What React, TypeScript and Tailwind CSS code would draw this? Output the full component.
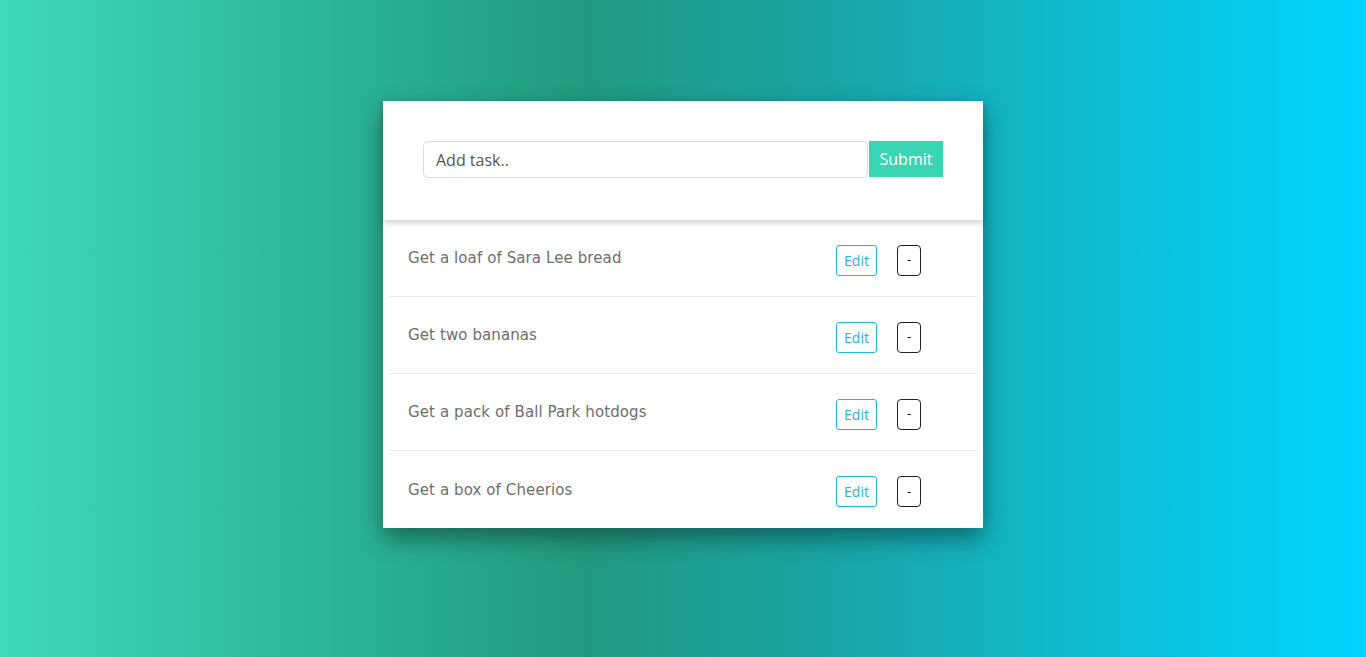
import { useState } from 'react';

const TASKS = [
  'Get a loaf of Sara Lee bread',
  'Get two bananas',
  'Get a pack of Ball Park hotdogs',
  'Get a box of Cheerios',
];

export default function App() {
  const [task, setTask] = useState('');

  return (
    <div className="min-h-screen w-full bg-[linear-gradient(to_right,#3cdabb_0%,#2bb395_25%,#229a80_43%,#1aa4a4_60%,#0fbcd0_80%,#00d4ff_100%)] pt-[101px] font-['Open_Sans',sans-serif]">
      <div className="mx-auto w-[600px] bg-white shadow-[0_10px_22px_rgba(0,0,0,0.4)]">

        {/* ── Add task ── */}
        <div className="relative z-10 flex h-[119px] items-start px-10 pt-10 shadow-[0_3px_6px_rgba(0,0,0,0.18)]">
          <input
            value={task}
            onChange={e => setTask(e.target.value)}
            placeholder="Add task.."
            className="h-[37px] min-w-0 flex-1 rounded-[5px] border border-[#dcdcdc] px-3 text-[16px] text-[#555] outline-none placeholder:text-[#555]"
          />
          <button className="ml-[1px] h-[36px] w-[74px] bg-[#3ad6b4] text-[16px] text-white">
            Submit
          </button>
        </div>

        {/* ── List ── */}
        <ul className="px-[6px]">
          {TASKS.map((t, i) => (
            <li
              key={t}
              className={`flex h-[77px] items-center pl-[19px] pr-[56px] ${i < TASKS.length - 1 ? 'border-b border-[#e8e8e8]' : ''}`}
            >
              <span className="mt-[1px] flex-1 font-['DejaVu_Sans',sans-serif] text-[15px] tracking-[0.1px] text-[#6e6e6e]">
                {t}
              </span>
              <button className="mt-[4px] h-[31px] w-[41px] rounded-[3px] border border-[#22b9d6] text-[14px] text-[#26b5d3]">
                Edit
              </button>
              <button className="ml-5 mt-[4px] h-[31px] w-[24px] rounded-[4px] border border-[#222] text-[13px] text-black">
                -
              </button>
            </li>
          ))}
        </ul>
      </div>
    </div>
  );
}
